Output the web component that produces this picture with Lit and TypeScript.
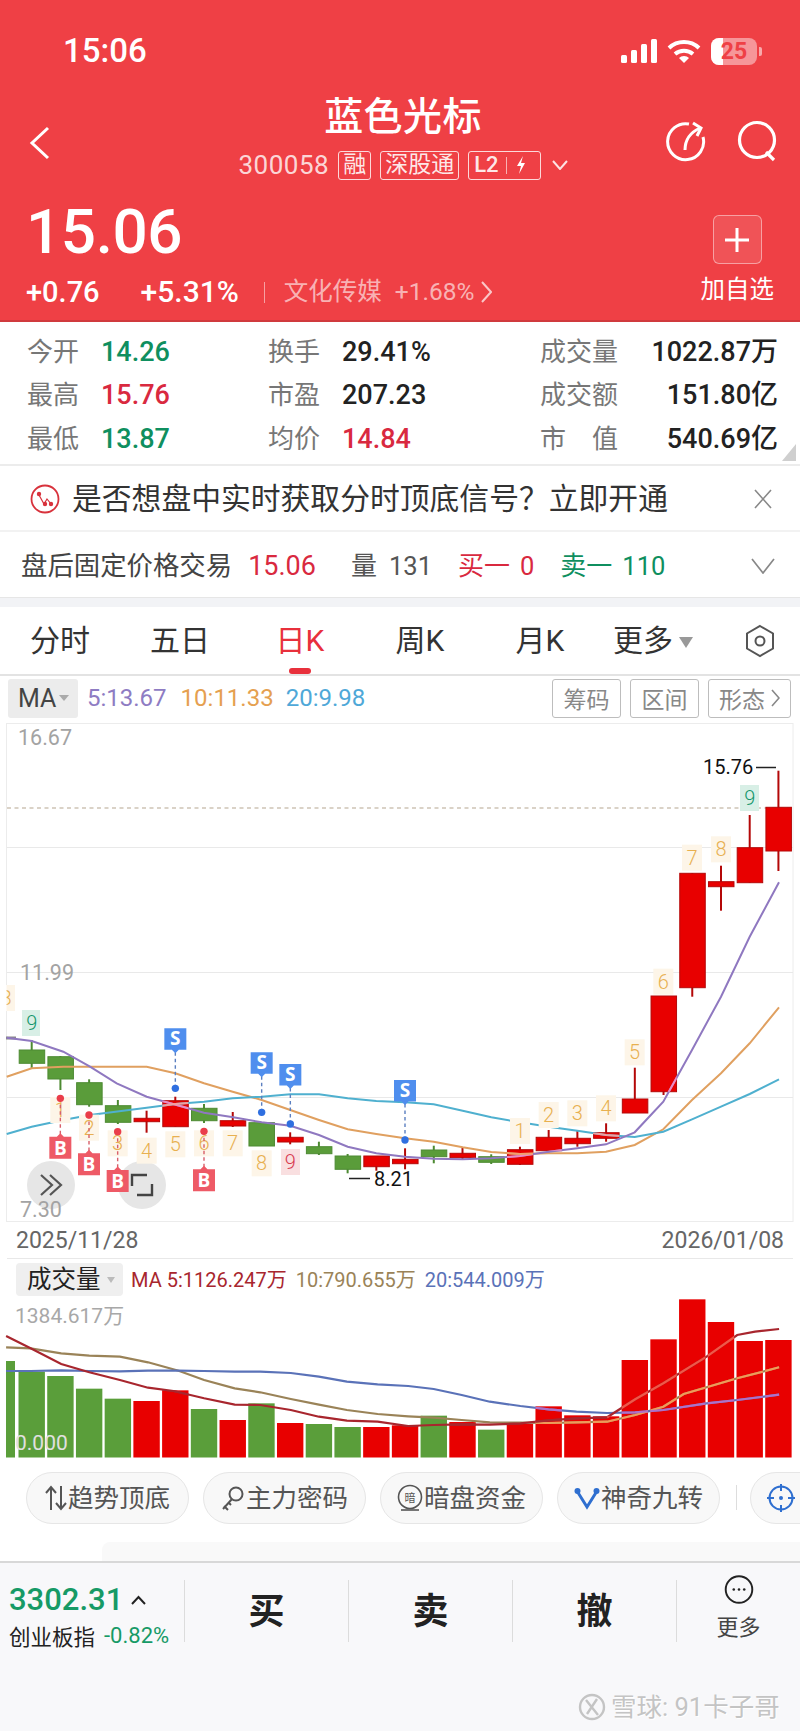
import { LitElement, html, css, svg } from "lit";
import { customElement } from "lit/decorators.js";

const X0 = 31.7, DX = 28.72;
const cx = (i: number) => X0 + DX * i;
type C = [string, number, number, number, number];
const candles: C[] = [
  ["g",1040,1050,1063.3,1068],["g",1056,1056.7,1079,1090],["g",1079.3,1082.7,1104.7,1106.7],["g",1100,1105.7,1122.3,1124],
  ["r",1110.7,1118.3,1121.7,1132.7],["r",1096.7,1100.7,1126.7,1126.7],["g",1104,1108.3,1120.7,1123],["r",1112,1120.7,1126,1127],
  ["g",1122.7,1122.7,1146,1146],["r",1132.3,1137.3,1142,1144.3],["g",1141.7,1146.7,1153.7,1155],["g",1154,1156,1169.3,1173.3],
  ["r",1156,1156,1166.7,1170.7],["r",1148.3,1159.3,1163.7,1169.3],["g",1145.7,1150,1156.7,1163.3],["r",1147.3,1153.3,1157.7,1159.3],
  ["g",1154.3,1156.7,1162.3,1164],["r",1146.7,1149.7,1164.3,1165],["r",1130,1137.3,1150.7,1152.7],["r",1130,1138.3,1143.7,1146.7],
  ["r",1123.3,1132.7,1138.3,1141.7],["r",1067.7,1099,1113,1113],["r",996,996,1091.7,1095],["r",873.3,873.3,987.7,996.7],
  ["r",865.7,881.7,886.7,910.7],["r",815,847.7,882.7,882.7],["r",770.7,807.3,851,871],
];
const a = (pts: number[][]) => pts.map(([x, y]) => [x / 3, 960 + y / 3]);
const b = (pts: number[][]) => pts.map(([x, y]) => [400 + x / 3, 720 + y / 3]);
const v = (pts: number[][]) => pts.map(([x, y]) => [x / 1.96, 1240 + y / 3]);
const poly = (pts: number[][]) => pts.map((p) => p[0].toFixed(1) + "," + p[1].toFixed(1)).join(" ");

const purple = [...a([[20,233],[95,243],[190,275],[270,320],[350,370],[440,410],[530,435],[612,458],[700,472],[785,487],[871,497],[957,525],[1043,560],[1129,580]]),
  ...b([[15,1310],[101,1316],[188,1318],[274,1315],[360,1308],[446,1295],[532,1285],[618,1273],[704,1237],[790,1145],[876,990],[963,830],[1049,650],[1137,487]])];
const orange = [...a([[20,350],[95,325],[190,320],[270,320],[440,320],[526,340],[612,370],[698,395],[785,420],[871,450],[957,480],[1043,508],[1129,522]]),
  ...b([[15,1255],[101,1265],[188,1282],[274,1296],[360,1302],[446,1300],[532,1300],[618,1295],[704,1275],[790,1228],[876,1140],[963,1060],[1049,970],[1137,862]])];
const blue = [...a([[20,522],[95,500],[190,480],[270,465],[440,443],[526,432],[612,425],[698,415],[785,410],[871,403],[957,403],[1043,415],[1129,423]]),
  ...b([[15,1147],[101,1153],[188,1172],[274,1192],[360,1207],[446,1220],[532,1232],[618,1245],[704,1251],[790,1235],[876,1198],[963,1160],[1049,1122],[1137,1078]])];

const nums: [number, number, string, string][] = [
  ...a([[181,450],[267,503],[353,550],[440,572],[526,553],[612,550],[698,550],[785,610]]).map((p, i) => [p[0], p[1], String(i + 1), "o"] as [number, number, string, string]),
  ...b([[360,1233],[446,1185],[532,1180],[618,1165],[704,997],[790,785],[876,413],[963,388]]).map((p, i) => [p[0], p[1], String(i + 1), "o"] as [number, number, string, string]),
];
const sells = [[526,205,385],[785,277,457],[871,312,492],[1215,360,540]];
const buys = [[181,530,415],[267,580,465],[353,630,515],[612,628,514]];

const volTops = [395,408,446,476,483,451,507,540,490,549,552,561,561,556,527,546,569,552,499,526,529,360,298,178,246,303,300];
const vy = (y: number) => 1240 + y / 3;
const volRed = v([[12,288],[60,325],[120,372],[175,397],[235,420],[290,443],[340,453],[400,475],[460,494],[510,495],[570,510],[625,530],[680,542],[740,545],[800,558],[850,555],[905,553],[960,554],[1020,550],[1075,541],[1130,535],[1190,532],[1245,478],[1300,430],[1385,350],[1445,285],[1480,275],[1527,267]]);
const volTan = v([[12,322],[60,325],[120,340],[175,347],[235,350],[290,367],[350,392],[400,420],[460,445],[510,457],[570,477],[625,494],[680,510],[740,522],[800,529],[850,533],[905,540],[960,547],[1020,548],[1075,549],[1130,547],[1190,545],[1245,525],[1300,500],[1340,462],[1385,442],[1445,415],[1527,382]]);
const volBlue = v([[12,393],[60,393],[120,391],[175,393],[235,394],[290,392],[350,392],[400,393],[460,395],[510,395],[570,399],[625,410],[680,425],[740,433],[800,438],[850,447],[905,465],[960,485],[1020,498],[1075,508],[1130,515],[1190,519],[1245,517],[1300,510],[1385,490],[1445,480],[1527,464]]);

const stats = [
  ["今开","14.26","g","换手","29.41%","k","成交量","1022.87万"],
  ["最高","15.76","r","市盈","207.23","k","成交额","151.80亿"],
  ["最低","13.87","g","均价","14.84","r","市　值","540.69亿"],
];

function chart() {
  return svg`
  <defs>
    <clipPath id="redBodies">${candles.map((c, i) => c[0] === "r" ? svg`<rect x=${cx(i) - 13} y=${c[2]} width="26" height=${c[3] - c[2]}></rect>` : null)}</clipPath>
  </defs>
  <rect x="6.5" y="723.5" width="786.5" height="498" fill="none" stroke="#ececec"></rect>
  ${[847, 972, 1097].map((y) => svg`<line x1="7" x2="793" y1=${y + 0.5} y2=${y + 0.5} stroke="#e9e9e9"></line>`)}
  <line x1="7" x2="793" y1="808" y2="808" stroke="#b5a68f" stroke-width="1.2" stroke-dasharray="4 3.5"></line>
  <circle cx="51" cy="1185" r="24" fill="#e6e6e6"></circle>
  <circle cx="142" cy="1185" r="24" fill="#e6e6e6"></circle>
  <text class="ax" x="18" y="745">16.67</text>
  <text class="ax" x="20" y="980">11.99</text>
  <text class="ax" x="20" y="1217">7.30</text>
  <rect x="6" y="985" width="9" height="26" fill="#fdf5e8"></rect>
  <text class="num o" x="6" y="1005" text-anchor="middle">8</text>
  <rect x="0" y="985" width="6.5" height="26" fill="#fff"></rect>
  ${candles.map((c, i) => {
    const col = c[0] === "r" ? "#e80000" : "#5a9c3a";
    const edge = c[0] === "r" ? "#b40808" : "#4d8a32";
    return svg`<line x1=${cx(i)} x2=${cx(i)} y1=${c[1]} y2=${c[4]} stroke=${edge} stroke-width="2"></line>
      <rect x=${cx(i) - 12.5} y=${c[2]} width="25.5" height=${Math.max(c[3] - c[2], 3)} fill=${col} stroke=${edge} stroke-width="1"></rect>`;
  })}
  <polyline points="6,1038 16,1038" fill="none" stroke="#888" stroke-width="3"></polyline>
  <polyline class="ln" points=${poly(orange)} stroke="#e0a060"></polyline>
  <polyline class="ln" points=${poly(blue)} stroke="#4fb0cf"></polyline>
  <polyline class="ln" points=${poly(purple)} stroke="#8f78c0"></polyline>
  <polyline class="ln" points=${poly(purple)} stroke="#f08ac0" clip-path="url(#redBodies)"></polyline>
  <polyline class="ln" points=${poly(orange)} stroke="#f0a070" clip-path="url(#redBodies)"></polyline>
  <polyline class="ln" points=${poly(blue)} stroke="#f0a0a0" clip-path="url(#redBodies)"></polyline>
  ${nums.map((n) => svg`<rect x=${n[0] - 10} y=${n[1] - 13} width="20" height="26" fill="#fdf5e8"></rect><text class="num o" x=${n[0]} y=${n[1] + 7} text-anchor="middle">${n[2]}</text>`)}
  <rect x="22" y="1010" width="18" height="26" fill="#d8efe6"></rect><text class="num gr" x="31.7" y="1030" text-anchor="middle">9</text>
  <rect x="740" y="785" width="19" height="26" fill="#d8efe6"></rect><text class="num gr" x="749.7" y="805" text-anchor="middle">9</text>
  <rect x="281" y="1149" width="19" height="26" fill="#f9dfe0"></rect><text class="num rd" x="290.3" y="1169" text-anchor="middle">9</text>
  ${sells.map(([x, t, d]) => {
    const px = x / 3, top = 960 + t / 3, dot = 960 + d / 3;
    return svg`<line x1=${px} x2=${px} y1=${top + 24} y2=${dot} stroke="#5b7fc0" stroke-width="1.4" stroke-dasharray="3.5 3"></line>
      <circle cx=${px} cy=${dot} r="3.7" fill="#2f6fe0"></circle>
      <path d="M${px - 11} ${top} h22 v21.5 h-7.5 l-3.5 3.5 l-3.5 -3.5 h-7.5 z" fill="#4f8eee"></path>
      <text class="mk" x=${px} y=${top + 17} text-anchor="middle">S</text>`;
  })}
  ${buys.map(([x, t, d]) => {
    const px = x / 3, top = 960 + t / 3, dot = 960 + d / 3;
    return svg`<line x1=${px} x2=${px} y1=${dot} y2=${top} stroke="#d8606a" stroke-width="1.4" stroke-dasharray="3.5 3"></line>
      <circle cx=${px} cy=${dot} r="3.7" fill="#ea3d4a"></circle>
      <path d="M${px - 11} ${top + 22} h22 v-22 h-7.5 l-3.5 -3.5 l-3.5 3.5 h-7.5 z" fill="#ee5a66"></path>
      <text class="mk" x=${px} y=${top + 18} text-anchor="middle">B</text>`;
  })}
  <text class="hl" x="703" y="774">15.76</text>
  <line x1="756" x2="776" y1="767.5" y2="767.5" stroke="#222" stroke-width="1.5"></line>
  <line x1="349" x2="370" y1="1178.5" y2="1178.5" stroke="#222" stroke-width="1.5"></line>
  <text class="hl" x="374" y="1186">8.21</text>
  <path d="M41 1175 l11 10 l-11 10 M50 1175 l11 10 l-11 10" fill="none" stroke="#555" stroke-width="2.2"></path>
  <path d="M132 1186 v-11 h15 M152 1184 v11 h-15" fill="none" stroke="#444" stroke-width="2.4"></path>
  `;
}

function volume() {
  return svg`
  <defs>
    <clipPath id="volRedClip">${volTops.map((t, i) => candles[i][0] === "r" ? svg`<rect x=${cx(i) - 13.2} y=${vy(t)} width="26.4" height=${1457 - vy(t)}></rect>` : null)}</clipPath>
  </defs>
  <rect x="6" y=${vy(363)} width="9" height=${1457.5 - vy(363)} fill="#5a9e3a"></rect>
  ${volTops.map((t, i) => svg`<rect x=${cx(i) - 13.2} y=${vy(t)} width="26.4" height=${1457.5 - vy(t)} fill=${candles[i][0] === "r" ? "#e80000" : "#5a9e3a"}></rect>`)}
  <polyline class="vl" points=${poly(volTan)} stroke="#9a8358"></polyline>
  <polyline class="vl" points=${poly(volBlue)} stroke="#5a72b8"></polyline>
  <polyline class="vl" points=${poly(volRed)} stroke="#a8262e"></polyline>
  <polyline class="vl" points=${poly(volTan)} stroke="#f09a58" clip-path="url(#volRedClip)"></polyline>
  <polyline class="vl" points=${poly(volBlue)} stroke="#b070c8" clip-path="url(#volRedClip)"></polyline>
  <polyline class="vl" points=${poly(volRed.slice(0, 25))} stroke="#a8262e" clip-path="url(#volRedClip)"></polyline>
  <polyline class="vl" points=${poly(volRed.slice(21, 26))} stroke="#f05848" clip-path="url(#volRedClip)"></polyline>
  <text class="vax" x="15" y="1323">1384.617万</text>
  <text class="vax z" x="15" y="1450">0.000</text>
  `;
}

@customElement("app-root")
export class AppRoot extends LitElement {
  static styles = css`
    :host { display: block; width: 800px; height: 1731px; overflow: hidden; background: #fff; position: relative;
      font-family: Roboto, "Noto Sans CJK SC", sans-serif; color: #222; }
    * { box-sizing: border-box; }
    svg { display: block; }

    .hd { height: 322px; background: #ef4045; color: #fff; border-bottom: 2px solid #d03a3e; }
    .status { height: 96px; padding: 6px 38px 0 63px; display: flex; align-items: center; justify-content: space-between; }
    .time { font-size: 33px; font-weight: 500; line-height: 40px; }
    .sicons { display: flex; align-items: center; gap: 10px; }
    .batt { width: 46px; height: 27px; border-radius: 8px; overflow: hidden; position: relative; background: rgba(255,255,255,.45); display: flex; align-items: center; justify-content: center; font-size: 23px; font-weight: 700; color: #ef4045; line-height: 27px; }
    .batt i { position: absolute; left: 0; top: 0; bottom: 0; width: 12px; background: #fff; }
    .batt span { position: relative; }
    .tip { width: 3px; height: 9px; background: rgba(255,255,255,.55); border-radius: 0 2px 2px 0; margin-left: -8px; }

    .nav { display: grid; grid-template-columns: 1fr auto 1fr; height: 85px; padding: 0 23px 0 29px; }
    .back { align-self: center; margin-top: 8px; }
    .mid { display: flex; flex-direction: column; align-items: center; }
    .title { font-size: 39px; line-height: 42px; font-weight: 500; letter-spacing: .4px; }
    .tags { display: flex; align-items: center; margin-top: 11px; height: 32px; gap: 9px; color: rgba(255,255,255,.8); }
    .code { font-size: 26px; line-height: 32px; letter-spacing: .5px; }
    .tag { height: 29px; border: 1px solid rgba(255,255,255,.8); border-radius: 3px; padding: 0 4px; font-size: 23px; line-height: 26px; display: flex; align-items: center; color: rgba(255,255,255,.9); }
    .tag.l2 { gap: 7px; font-size: 22px; padding: 0 12px 0 5px; font-weight: 500; }
    .tag.l2 u { width: 1px; height: 17px; background: rgba(255,255,255,.6); text-decoration: none; }
    .actions { display: flex; justify-content: flex-end; align-items: center; gap: 31px; margin-top: 4px; }

    .prow { display: flex; justify-content: space-between; padding: 0 26px 0 26px; }
    .price { font-size: 62px; font-weight: 500; line-height: 70px; margin-top: 16px; letter-spacing: -.4px; }
    .chg { display: flex; align-items: center; height: 36px; margin-top: 7px; }
    .chg b { font-weight: 500; font-size: 29px; line-height: 36px; }
    .chg .p2 { margin-left: 41px; font-size: 30px; }
    .chg .bar { width: 1px; height: 21px; background: rgba(255,255,255,.5); margin: 0 19px 0 25px; }
    .chg .ind { font-size: 24.5px; color: rgba(255,255,255,.62); line-height: 36px; }
    .chg .pct { font-size: 24.5px; color: rgba(255,255,255,.62); margin-left: 13px; line-height: 36px; }
    .add { display: flex; flex-direction: column; align-items: center; margin-top: 34px; }
    .plus { width: 49px; height: 49px; border-radius: 6px; border: 1px solid rgba(255,255,255,.45); background: rgba(255,255,255,.1); display: flex; align-items: center; justify-content: center; }
    .add span { font-size: 24.5px; line-height: 34px; margin-top: 9px; white-space: nowrap; }

    .stats { height: 144px; padding: 8px 22px 0 27px; border-bottom: 2px solid #ececec; position: relative; }
    .srow { display: grid; grid-template-columns: 74px 167px 74px 198px 78px 1fr; height: 43.5px; align-items: center; }
    .lb { font-size: 26px; color: #777; line-height: 34px; white-space: nowrap; }
    .val { font-size: 27px; font-weight: 500; line-height: 34px; color: #222; white-space: nowrap; }
    .val.g { color: #0f8f5f; } .val.r { color: #d9293f; }
    .val.right { text-align: right; }
    .corner { position: absolute; right: 4px; bottom: 3px; width: 0; height: 0; border-left: 14px solid transparent; border-bottom: 17px solid #cfcfcf; }

    .banner { height: 66px; display: flex; align-items: center; padding: 2px 28px 0 30px; border-bottom: 2px solid #f2f2f2; }
    .banner span { font-size: 29.8px; line-height: 40px; color: #333; margin-left: 12px; flex: 1; white-space: nowrap; }

    .after { height: 66px; padding: 3px 25px 0 21px; display: flex; align-items: center; border-bottom: 1px solid #e6e6e6; white-space: nowrap; }
    .after .l { font-size: 26.4px; color: #444; line-height: 34px; }
    .after .n { font-size: 27px; line-height: 34px; }
    .after .s { font-size: 25.5px; line-height: 34px; }
    .after .m { font-size: 26px; line-height: 34px; }
    .rd { color: #d9293f; } .gn { color: #0f8f5f; } .dk { color: #555; }
    .after .sp { flex: 1; }
    .ml16 { margin-left: 16px; } .ml36 { margin-left: 35px; } .ml12 { margin-left: 12px; } .ml26 { margin-left: 26px; } .ml10 { margin-left: 10px; }

    .band { height: 9px; background: #f2f3f6; }

    .tabs { height: 69px; display: grid; grid-template-columns: repeat(5, 120px) 120px 80px; align-items: center; border-bottom: 2px solid #e3e3e3; position: relative; padding-top: 1px; }
    .tab { text-align: center; font-size: 30px; line-height: 40px; color: #333; position: relative; height: 40px; white-space: nowrap; }
    .tab.on { color: #e8303c; }
    .tab.on::after { content: ""; position: absolute; left: 49px; top: 47px; width: 22px; height: 6px; border-radius: 3px; background: #e8303c; }
    .more { display: flex; align-items: center; gap: 6px; justify-content: flex-start; padding-left: 13px; }
    .more i { width: 0; height: 0; border-left: 7px solid transparent; border-right: 7px solid transparent; border-top: 11px solid #999; margin-top: 2px; }
    .hex { justify-self: center; }

    .tool { height: 44px; display: flex; align-items: center; padding: 0 9px 0 8px; white-space: nowrap; }
    .ma { width: 70px; height: 39px; background: #ececec; border-radius: 3px; font-size: 25px; color: #444; display: flex; align-items: center; padding-left: 10px; gap: 3px; line-height: 39px; }
    .ma i { width: 0; height: 0; border-left: 5px solid transparent; border-right: 5px solid transparent; border-top: 6px solid #aaa; }
    .mv { font-size: 24px; line-height: 32px; }
    .mv.a { color: #8e7cc3; margin-left: 9px; } .mv.b { color: #e5a050; margin-left: 14px; } .mv.c { color: #4fa8d8; margin-left: 12px; }
    .tool .sp { flex: 1; }
    .tb { height: 39px; width: 69px; border: 1px solid #bdbdbd; border-radius: 3px; font-size: 23px; color: #888; display: flex; align-items: center; justify-content: center; margin-left: 9px; }
    .tb.w { width: 83px; gap: 6px; }

    .ch { width: 800px; height: 503px; }
    .ax { font: 21.5px Roboto, sans-serif; fill: #a3a3a3; }
    .num { font: 300 20px Roboto, sans-serif; }
    .num.o { fill: #e8b050; } .num.gr { fill: #12966a; } .num.rd { fill: #d83a50; }
    .ln { fill: none; stroke-width: 2; }
    .vl { fill: none; stroke-width: 2.2; }
    .mk { font: 700 19px "Open Sans", Roboto, sans-serif; fill: #fff; }
    .hl { font: 20px Roboto, sans-serif; fill: #111; }

    .dates { height: 36px; display: flex; justify-content: space-between; align-items: center; font-size: 23px; color: #666; border-bottom: 1px solid #e8e8e8; margin: 0 7px; padding: 0 9px; }
    .vh { height: 37px; display: flex; align-items: center; padding: 4px 0 0 16px; white-space: nowrap; }
    .vbox { width: 107px; height: 33px; background: #efefef; border-radius: 4px; font-size: 24.5px; color: #222; display: flex; align-items: center; padding-left: 11px; gap: 6px; line-height: 33px; }
    .vbox i { width: 0; height: 0; border-left: 4px solid transparent; border-right: 4px solid transparent; border-top: 6px solid #bbb; }
    .vm { font-size: 20px; line-height: 30px; }
    .vm.a { color: #a8262e; margin-left: 8px; } .vm.b { color: #9a8358; margin-left: 9px; } .vm.c { color: #5a72b8; margin-left: 9px; }
    .vc { width: 800px; height: 165px; }
    .vax { font: 21px Roboto, "Noto Sans CJK SC", sans-serif; fill: #a8a8a8; }
    .vax.z { fill: #e0e0e0; }

    .chips { height: 81px; padding: 11px 0 0 26px; display: flex; gap: 14px; overflow: hidden; position: relative; }
    .chip { flex: none; width: 163px; height: 52px; border-radius: 26px; background: #f8f8f8; border: 1px solid #e6e6e6; display: flex; align-items: center; justify-content: center; gap: 1px; font-size: 25.5px; color: #555; white-space: nowrap; line-height: 34px; }
    .chip.tail { margin-left: 16px; justify-content: flex-start; padding-left: 16px; }
    .div { position: absolute; left: 736px; top: 24px; width: 1px; height: 25px; background: #ddd; }
    .sheet { height: 19px; margin-left: 102px; background: #f9f9f9; border-radius: 8px 0 0 0; }

    .foot { height: 170px; background: #f8f8fa; border-top: 2px solid #d8d8d8; position: relative; display: grid; grid-template-columns: 184px 164px 164px 164px 124px; padding-top: 17px; }
    .idx { padding: 1px 0 0 9px; height: 62px; }
    .idx .top { display: flex; align-items: center; gap: 8px; height: 38px; }
    .idx b { font-size: 31px; font-weight: 500; color: #169a66; line-height: 38px; }
    .idx .bot { display: flex; align-items: center; gap: 9px; font-size: 21.5px; height: 30px; margin-top: 1px; white-space: nowrap; color: #222; }
    .idx .bot em { font-style: normal; color: #169a66; font-size: 22px; }
    .act { border-left: 1px solid #dcdcdc; height: 62px; display: flex; align-items: center; justify-content: center; font-size: 36px; font-weight: 700; color: #222; line-height: 62px; padding-top: 2px; }
    .act.m { flex-direction: column; font-size: 22px; font-weight: 400; color: #444; gap: 10px; line-height: 28px; justify-content: flex-start; padding-top: 0; }
    .act.m svg { margin-top: -5px; }
    .wm { position: absolute; left: 578px; top: 126px; display: flex; align-items: center; gap: 5px; font-size: 25.5px; line-height: 36px; color: #c4c4c4; text-shadow: 0 0 1px #fff, 1px 1px 0 #fff; white-space: nowrap; }
  `;

  render() {
    return html`
      <div class="hd">
        <div class="status">
          <div class="time">15:06</div>
          <div class="sicons">
            <svg width="36" height="24" viewBox="0 0 36 24" fill="#fff"><rect x="0" y="16" width="6" height="8" rx="1.5"></rect><rect x="10" y="11" width="6" height="13" rx="1.5"></rect><rect x="20" y="5" width="6" height="19" rx="1.5"></rect><rect x="30" y="0" width="6" height="24" rx="1.5"></rect></svg>
            <svg width="34" height="26" viewBox="0 0 34 26" fill="none" stroke="#fff" stroke-width="4"><path d="M2 10 A22 22 0 0 1 32 10"></path><path d="M8 16 A14 14 0 0 1 26 16"></path><path d="M17 25 L12 20 A7 7 0 0 1 22 20 Z" fill="#fff" stroke="none"></path></svg>
            <div class="batt"><i></i><span>25</span></div>
            <div class="tip"></div>
          </div>
        </div>
        <div class="nav">
          <svg class="back" width="22" height="34" viewBox="0 0 22 34" fill="none" stroke="#fff" stroke-width="3"><path d="M19 2 L3 17 L19 32"></path></svg>
          <div class="mid">
            <div class="title">蓝色光标</div>
            <div class="tags">
              <span class="code">300058</span>
              <span class="tag">融</span>
              <span class="tag">深股通</span>
              <span class="tag l2">L2<u></u><svg width="14" height="20" viewBox="0 0 14 20" fill="#fff"><path d="M9 1 L3 11 L7 11 L5 19 L11 8 L7 8 Z"></path></svg></span>
              <svg style="margin-left:2px" width="16" height="10" viewBox="0 0 16 10" fill="none" stroke="rgba(255,255,255,.85)" stroke-width="2"><path d="M1 1 L8 9 L15 1"></path></svg>
            </div>
          </div>
          <div class="actions">
            <svg width="40" height="42" viewBox="0 0 40 42" fill="none" stroke="#fff" stroke-width="3"><path d="M23 4 A18 18 0 1 0 37 17"></path><path d="M19 30 C19 21 23 13 34 8"></path><path d="M27 3 L35 8 L31 16"></path></svg>
            <svg width="40" height="42" viewBox="0 0 40 42" fill="none" stroke="#fff" stroke-width="3.2"><circle cx="20" cy="20" r="17.5"></circle><path d="M29 32 L37 40"></path></svg>
          </div>
        </div>
        <div class="prow">
          <div>
            <div class="price">15.06</div>
            <div class="chg">
              <b>+0.76</b><b class="p2">+5.31%</b><i class="bar"></i>
              <span class="ind">文化传媒</span><span class="pct">+1.68%</span>
              <svg style="margin-left:7px" width="11" height="22" viewBox="0 0 11 22" fill="none" stroke="rgba(255,255,255,.7)" stroke-width="2"><path d="M1 1 L10 11 L1 21"></path></svg>
            </div>
          </div>
          <div class="add">
            <div class="plus"><svg width="26" height="26" viewBox="0 0 26 26" stroke="#fff" stroke-width="3"><path d="M13 1 V25 M1 13 H25"></path></svg></div>
            <span>加自选</span>
          </div>
        </div>
      </div>

      <div class="stats">
        ${stats.map((r) => html`<div class="srow">
          <span class="lb">${r[0]}</span><span class="val ${r[2]}">${r[1]}</span>
          <span class="lb">${r[3]}</span><span class="val ${r[5]}">${r[4]}</span>
          <span class="lb">${r[6]}</span><span class="val right">${r[7]}</span>
        </div>`)}
        <div class="corner"></div>
      </div>

      <div class="banner">
        <svg width="30" height="30" viewBox="0 0 30 30" fill="none" stroke="#d8323c" stroke-width="1.8"><circle cx="15" cy="15" r="13.5"></circle><path d="M9 11 L14 20 L17 15 L21 20" stroke-width="1.2"></path><circle cx="9" cy="10" r="2.2" fill="#d8323c" stroke="none"></circle><circle cx="15" cy="20" r="2.2" fill="#d8323c" stroke="none"></circle><circle cx="21" cy="20" r="2.2" fill="#d8323c" stroke="none"></circle></svg>
        <span>是否想盘中实时获取分时顶底信号？立即开通</span>
        <svg width="18" height="20" viewBox="0 0 18 20" stroke="#888" stroke-width="1.6"><path d="M1 1 L17 19 M17 1 L1 19"></path></svg>
      </div>

      <div class="after">
        <span class="l">盘后固定价格交易</span>
        <span class="n rd ml16">15.06</span>
        <span class="m dk ml36">量</span>
        <span class="s dk ml12">131</span>
        <span class="m rd ml26">买一</span>
        <span class="s rd ml10">0</span>
        <span class="m gn ml26">卖一</span>
        <span class="s gn ml10">110</span>
        <span class="sp"></span>
        <svg width="24" height="16" viewBox="0 0 24 16" fill="none" stroke="#888" stroke-width="1.7"><path d="M1 1 L12 15 L23 1"></path></svg>
      </div>
      <div class="band"></div>

      <div class="tabs">
        <div class="tab">分时</div>
        <div class="tab">五日</div>
        <div class="tab on">日K</div>
        <div class="tab">周K</div>
        <div class="tab">月K</div>
        <div class="tab more"><span>更多</span><i></i></div>
        <svg class="hex" width="30" height="34" viewBox="0 0 30 34" fill="none" stroke="#555" stroke-width="2"><path d="M15 2 L28 9.5 V24.5 L15 32 L2 24.5 V9.5 Z"></path><circle cx="15" cy="17" r="4.5"></circle></svg>
      </div>

      <div class="tool">
        <div class="ma">MA<i></i></div>
        <span class="mv a">5:13.67</span><span class="mv b">10:11.33</span><span class="mv c">20:9.98</span>
        <span class="sp"></span>
        <span class="tb">筹码</span><span class="tb">区间</span>
        <span class="tb w">形态<svg width="9" height="18" viewBox="0 0 9 18" fill="none" stroke="#888" stroke-width="1.6"><path d="M1 1 L8 9 L1 17"></path></svg></span>
      </div>

      <svg class="ch" viewBox="0 720 800 503">${chart()}</svg>

      <div class="dates"><span>2025/11/28</span><span>2026/01/08</span></div>

      <div class="vh">
        <div class="vbox">成交量<i></i></div>
        <span class="vm a">MA 5:1126.247万</span><span class="vm b">10:790.655万</span><span class="vm c">20:544.009万</span>
      </div>
      <svg class="vc" viewBox="0 1296 800 165">${volume()}</svg>

      <div class="chips">
        <div class="chip"><svg width="22" height="26" viewBox="0 0 22 26" fill="none" stroke="#555" stroke-width="2"><path d="M6 25 V3 M1 8 L6 2 L11 8 M16 1 V23 M11 18 L16 24 L21 18"></path></svg>趋势顶底</div>
        <div class="chip"><svg width="24" height="26" viewBox="0 0 24 26" fill="none" stroke="#555" stroke-width="2"><circle cx="15" cy="9" r="6.5"></circle><path d="M11 14 L2 24 M3 21 L7 25 M7 17 L10 20"></path></svg>主力密码</div>
        <div class="chip"><svg width="26" height="28" viewBox="0 0 26 28" fill="none" stroke="#555" stroke-width="1.6"><circle cx="13" cy="13" r="11.5"></circle><path d="M4 26 H22"></path><text x="13" y="17.5" font-size="11" fill="#555" stroke="none" text-anchor="middle" font-family="Noto Sans CJK SC">暗</text></svg>暗盘资金</div>
        <div class="chip"><svg width="26" height="24" viewBox="0 0 26 24" fill="none" stroke="#2f6fd0" stroke-width="3"><path d="M3 5 L13 21 L23 5"></path><circle cx="3.5" cy="5" r="3" fill="#2f6fd0" stroke="none"></circle><circle cx="22.5" cy="5" r="3" fill="#2f6fd0" stroke="none"></circle></svg>神奇九转</div>
        <div class="chip tail"><svg width="28" height="36" viewBox="0 0 28 36" fill="none" stroke="#2f6fd0" stroke-width="2"><circle cx="14" cy="18" r="11.5"></circle><path d="M14 4 V11 M14 25 V32 M0 18 H7 M21 18 H28"></path><circle cx="14" cy="18" r="2" fill="#2f6fd0" stroke="none"></circle></svg></div>
        <div class="div"></div>
      </div>
      <div class="sheet"></div>

      <div class="foot">
        <div class="idx">
          <div class="top"><b>3302.31</b><svg width="15" height="10" viewBox="0 0 15 10" fill="none" stroke="#222" stroke-width="2"><path d="M1 9 L7.5 2 L14 9"></path></svg></div>
          <div class="bot"><span>创业板指</span><em>-0.82%</em></div>
        </div>
        <div class="act">买</div>
        <div class="act">卖</div>
        <div class="act">撤</div>
        <div class="act m">
          <svg width="36" height="36" viewBox="0 0 36 36" fill="#222"><circle cx="18" cy="18" r="16.5" fill="none" stroke="#222" stroke-width="2.4"></circle><circle cx="11.5" cy="18" r="1.6"></circle><circle cx="18" cy="18" r="1.6"></circle><circle cx="24.5" cy="18" r="1.6"></circle></svg>
          <span>更多</span>
        </div>
        <div class="wm">
          <svg width="28" height="28" viewBox="0 0 28 28" fill="none" stroke="#c4c4c4" stroke-width="2.4"><circle cx="14" cy="14" r="12"></circle><path d="M8 7 L20 22 M19 6 L9 21"></path></svg>
          <span>雪球: 91卡子哥</span>
        </div>
      </div>
    `;
  }
}
